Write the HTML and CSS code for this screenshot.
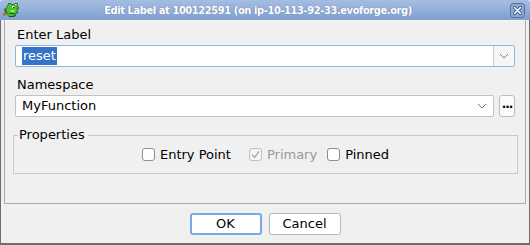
FILE: index.html
```html
<!DOCTYPE html>
<html lang="en">
<head>
  <meta charset="UTF-8">
  <title>Edit Label</title>
  <link rel="stylesheet" href="styles.css">
</head>
<body>
  <div class="window">
    <!-- Title bar -->
    <div class="titlebar">
      <svg class="app-icon" width="17" height="17" viewBox="0 0 17 17">
        <path d="M5 1h3l1 1h2l1-1h3v2l-1 1 2 1v2l-2 1 1 1v2l-2 1v2l-2 1H7l-2-1-1-2-2 1-1-1 1-2-1-1V7l2-1 1-2 1-2z" fill="#2a7a26"/>
        <path d="M6 2h2l1 1h2l1-1h2v1l-1 1 2 2-2 1 1 2-1 2-2 1-1 2H7L5 13 4 10 3 8l1-2 1-2z" fill="#4fbf36"/>
        <path d="M7 8h5v1l-2 1H8z" fill="#9ae06a"/>
        <rect x="9" y="4" width="2" height="2" fill="#fff"/>
        <rect x="10" y="5" width="1" height="1" fill="#111"/>
        <rect x="12" y="2" width="2" height="1" fill="#d8e85a"/>
        <path d="M0 11h3v1H2v2H0z" fill="#e0622e"/>
        <rect x="6" y="11" width="5" height="1" fill="#1d5a1a"/>
        <rect x="6" y="14" width="5" height="1" fill="#1d5a1a"/>
      </svg>
      <div class="title">Edit Label at 100122591 (on ip-10-113-92-33.evoforge.org)</div>
      <svg class="close" width="15" height="15" viewBox="0 0 15 15">
        <rect x="0.5" y="0.5" width="14" height="14" rx="3" fill="#8eaad6" stroke="#4f6f9f"/>
        <path d="M4.5 4.5l6 6M10.5 4.5l-6 6" stroke="#3d5a88" stroke-width="3.2" stroke-linecap="round"/>
        <path d="M4.5 4.5l6 6M10.5 4.5l-6 6" stroke="#ffffff" stroke-width="1.6" stroke-linecap="round"/>
      </svg>
    </div>

    <div class="frame">
      <div class="panel">
        <div class="label">Enter Label</div>
        <div class="field focused">
          <div class="field-text"><span class="selected">reset</span></div>
          <div class="arrow-box">
            <svg width="10" height="6" viewBox="0 0 10 6"><path d="M1 1l4 4 4-4" fill="none" stroke="#777" stroke-width="1"/></svg>
          </div>
        </div>

        <div class="label">Namespace</div>
        <div class="ns-row">
          <div class="field combo">
            <div class="field-text">MyFunction</div>
            <svg class="chevron" width="10" height="6" viewBox="0 0 10 6"><path d="M1 1l4 4 4-4" fill="none" stroke="#777" stroke-width="1"/></svg>
          </div>
          <div class="more-btn">...</div>
        </div>

        <div class="group">
          <div class="group-title">Properties</div>
          <div class="checks">
            <div class="check gap-wide"><span class="box"></span>Entry Point</div>
            <div class="check disabled gap-narrow">
              <span class="box">
                <svg width="11" height="11" viewBox="0 0 11 11"><path d="M2 5.5l2.5 3 4.5-6" fill="none" stroke="#a9a9a9" stroke-width="1.3"/></svg>
              </span>Primary
            </div>
            <div class="check"><span class="box"></span>Pinned</div>
          </div>
        </div>
      </div>

      <div class="buttons">
        <div class="button default">OK</div>
        <div class="button">Cancel</div>
      </div>
    </div>
  </div>
</body>
</html>
```

FILE: styles.css
```css
body {
  margin: 0;
  font-family: 'DejaVu Sans', sans-serif;
  font-size: 13px;
  color: #000;
  background-color: #f0f0f0;
}

.window {
  width: 530px;
  height: 245px;
  display: flex;
  flex-direction: column;
}

/* Title bar */
.titlebar {
  height: 20px;
  flex: none;
  display: flex;
  align-items: center;
  padding: 0 5px 0 3px;
  background: linear-gradient(#a6bde2, #7f9fd0);
  border-radius: 3px 3px 0 0;
}

.app-icon {
  flex: none;
}

.title {
  flex: 1;
  text-align: center;
  color: #fff;
  font-family: 'DejaVu Sans Condensed', 'DejaVu Sans', sans-serif;
  font-weight: bold;
  font-size: 11px;
  letter-spacing: -0.4px;
  padding-right: 14px;
  text-shadow: 0 0 1px rgba(40, 60, 100, 0.5);
}

.close {
  flex: none;
}

/* Window body */
.frame {
  flex: 1;
  display: flex;
  flex-direction: column;
  border: 1px solid #6e6e6e;
  border-top: none;
  border-bottom: 2px solid #6e6e6e;
  padding: 0 3px;
  background-color: #f0f0f0;
}

.panel {
  height: 184px;
  box-sizing: border-box;
  border: 1px solid #a9a9a9;
  border-top-color: #f6f6f6;
  padding: 6px 10px 0 10px;
}

.label {
  line-height: 16px;
  margin: 0 0 2px 2px;
}

.label + .field,
.label + .ns-row {
  margin-bottom: 10px;
}

.field {
  height: 22px;
  box-sizing: border-box;
  display: flex;
  align-items: stretch;
  background-color: #fff;
  border: 1px solid #c2c2c2;
  border-radius: 2px;
}

.field.focused {
  border-color: #8fb4e6;
}

.field-text {
  flex: 1;
  line-height: 20px;
  padding-left: 6px;
}

.selected {
  display: inline-block;
  background-color: #3573c8;
  color: #fff;
  padding: 0 1px;
  height: 18px;
  line-height: 18px;
  margin-top: 1px;
  vertical-align: top;
}

.arrow-box {
  width: 20px;
  display: flex;
  align-items: center;
  justify-content: center;
  border-left: 1px solid #cfcfcf;
  background-color: #f6f6f6;
}

.ns-row {
  display: flex;
  gap: 5px;
}

.combo {
  flex: 1;
  align-items: center;
}

.chevron {
  margin-right: 6px;
}

.more-btn {
  width: 16px;
  height: 22px;
  box-sizing: border-box;
  border: 1px solid #bdbdbd;
  border-radius: 3px;
  background-color: #fbfbfb;
  font-weight: bold;
  font-size: 12px;
  line-height: 17px;
  text-align: center;
  letter-spacing: -1px;
}

/* Properties group */
.group {
  margin: 7px -3px 0 -2px;
}

.group-title {
  display: flex;
  align-items: center;
  line-height: 16px;
  padding-left: 6px;
}

.group-title::before {
  content: "";
  width: 5px;
  border-top: 1px solid #c8c8c8;
  margin-left: -6px;
  margin-right: 1px;
}

.group-title::after {
  content: "";
  flex: 1;
  border-top: 1px solid #c8c8c8;
  margin-left: 3px;
}

.checks {
  height: 37px;
  margin-top: -8px;
  padding-top: 1px;
  border: 1px solid #c8c8c8;
  border-top: none;
  display: flex;
  align-items: center;
  justify-content: center;
}

.check {
  display: flex;
  align-items: center;
  gap: 5px;
}

.gap-wide {
  margin-right: 18px;
}

.gap-narrow {
  margin-right: 10px;
}

.box {
  width: 13px;
  height: 13px;
  box-sizing: border-box;
  border: 1px solid #8e8e8e;
  border-radius: 3px;
  background-color: #fff;
  display: flex;
  align-items: center;
  justify-content: center;
}

.check.disabled {
  color: #9a9a9a;
}

.check.disabled .box {
  border-color: #c0c0c0;
  background-color: #f5f5f5;
}

/* Dialog buttons */
.buttons {
  display: flex;
  justify-content: center;
  gap: 7px;
  padding-top: 9px;
}

.button {
  width: 72px;
  height: 22px;
  box-sizing: border-box;
  border: 1px solid #b8b8b8;
  border-radius: 3px;
  background-color: #fff;
  text-align: center;
  line-height: 20px;
}

.button.default {
  border: 2px solid #76a9e6;
  line-height: 18px;
}
```
